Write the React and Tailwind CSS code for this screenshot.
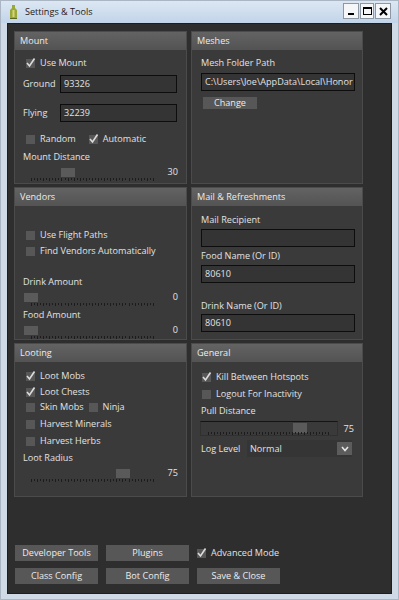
import React from "react";

const Check = ({ checked, label, className = "" }) => (
  <div className={`flex items-center h-[14px] ${className}`}>
    <span className="relative w-[9px] h-[9px] bg-[#575757] shrink-0">
      {checked && (
        <svg className="absolute -left-[1px] -top-[2px]" width="11" height="11" viewBox="0 0 11 11">
          <path d="M2 6 L4.5 9 L9.5 1.5" fill="none" stroke="#dcdcdc" strokeWidth="1.6" />
        </svg>
      )}
    </span>
    <span className="ml-[5px] whitespace-nowrap">{label}</span>
  </div>
);

const Ticks = () => (
  <div className="flex justify-between items-start">
    {Array.from({ length: 41 }).map((_, i) => (
      <span key={i} className={`w-[1px] bg-[#1c1c1c] ${i % 2 === 0 ? "h-[3px]" : "h-[2px]"}`} />
    ))}
  </div>
);

const Slider = ({ value, className = "" }) => (
  <div className={`flex items-start h-[17px] ${className}`}>
    <div className="relative w-[137px] h-[17px] ml-[1px]">
      <div
        className="absolute top-[4px] w-[14px] h-[9px] bg-[#5a5a5a]"
        style={{ left: `${(value / 100) * 123}px` }}
      />
      <div className="absolute left-[7px] right-[7px] top-[14px]">
        <Ticks />
      </div>
    </div>
    <span className="ml-auto mt-[3px]">{value}</span>
  </div>
);

const Field = ({ value = "", className = "" }) => (
  <div
    className={`h-[18px] bg-[#343434] border-[1.5px] border-[#0d0d0d] flex items-center px-[3px] whitespace-nowrap overflow-hidden ${className}`}
  >
    {value}
  </div>
);

const Panel = ({ title, children }) => (
  <div className="flex flex-col bg-[#3a3a3a] border border-[#4b4b4b]">
    <div className="h-[18px] shrink-0 px-[5px] flex items-center bg-gradient-to-b from-[#636363] to-[#535353] text-[#ececec]">
      {title}
    </div>
    <div className="flex-1 flex flex-col pl-[8px] pr-[8px]">{children}</div>
  </div>
);

const Btn = ({ children, className = "" }) => (
  <button className={`w-[83px] h-[16px] bg-[#575757] text-[#ececec] flex items-center justify-center ${className}`}>
    {children}
  </button>
);

export default function App() {
  return (
    <div className="w-[399px] h-[600px] bg-[#cfdae6] flex flex-col font-['Open_Sans',sans-serif] text-[9.1px] leading-none border border-[#aab6c3]">
      {/* title bar */}
      <div className="h-[22px] shrink-0 flex items-center bg-gradient-to-b from-[#dce7f3] to-[#c2d4e9]">
        <svg className="ml-[8px]" width="9" height="15" viewBox="0 0 9 15">
          <path d="M3 0 h3 v3 l2 2 v9 h-7 v-9 l2 -2z" fill="#9aa83a" />
          <path d="M3.5 5 h2 v7 h-2z" fill="#d9d27a" />
          <path d="M1 13 h7 v1 h-7z" fill="#5c6a22" />
        </svg>
        <span className="ml-[7px] text-[#1b1b1b]">Settings &amp; Tools</span>
        <div className="ml-auto mr-[7px] flex gap-[1px] mt-[-2px]">
          <div className="w-[16px] h-[16px] bg-[#f4f6f8] border border-[#8d98a4] flex items-end justify-center pb-[3px]">
            <span className="w-[6px] h-[2px] bg-black" />
          </div>
          <div className="w-[14px] h-[16px] bg-[#f4f6f8] border border-[#8d98a4] flex items-center justify-center">
            <span className="w-[9px] h-[8px] border border-black border-t-2" />
          </div>
          <div className="w-[16px] h-[16px] bg-[#f4f6f8] border border-[#8d98a4] flex items-center justify-center">
            <svg width="9" height="9" viewBox="0 0 9 9">
              <path d="M1 1 L8 8 M8 1 L1 8" stroke="black" strokeWidth="2" />
            </svg>
          </div>
        </div>
      </div>

      {/* client */}
      <div className="flex-1 mx-[6px] mb-[5px] bg-[#2e2e2e] border border-[#1e1e1e] pl-[6px] pt-[7px] text-[#e2e2e2]">
        <div className="grid grid-cols-[173px_172px] grid-rows-[153px_153px_154px] gap-x-[4px] gap-y-[3px]">
          {/* Mount */}
          <Panel title="Mount">
            <Check checked label="Use Mount" className="mt-[6px] ml-[3px]" />
            <div className="flex items-center mt-[5px]">
              <span className="w-[37px]">Ground</span>
              <Field value="93326" className="w-[117px]" />
            </div>
            <div className="flex items-center mt-[11px]">
              <span className="w-[37px]">Flying</span>
              <Field value="32239" className="w-[117px]" />
            </div>
            <div className="flex mt-[10px] ml-[3px]">
              <Check label="Random" />
              <Check checked label="Automatic" className="ml-[13px]" />
            </div>
            <div className="h-[14px] flex items-center mt-[4px]">Mount Distance</div>
            <Slider value={30} />
          </Panel>

          {/* Meshes */}
          <Panel title="Meshes">
            <div className="h-[14px] flex items-center mt-[6px] ml-[1px]">Mesh Folder Path</div>
            <Field value="C:\Users\Joe\AppData\Local\Honor" className="w-[154px] mt-[3px] ml-[1px]" />
            <Btn className="!w-[54px] !h-[12px] mt-[6px] ml-[3px]">Change</Btn>
          </Panel>

          {/* Vendors */}
          <Panel title="Vendors">
            <Check label="Use Flight Paths" className="mt-[22px] ml-[3px]" />
            <Check label="Find Vendors Automatically" className="mt-[2px] ml-[3px]" />
            <div className="h-[14px] flex items-center mt-[17px]">Drink Amount</div>
            <Slider value={0} />
            <div className="h-[14px] flex items-center mt-[2px]">Food Amount</div>
            <Slider value={0} />
          </Panel>

          {/* Mail & Refreshments */}
          <Panel title="Mail & Refreshments">
            <div className="h-[14px] flex items-center mt-[7px] ml-[1px]">Mail Recipient</div>
            <Field className="w-[154px] mt-[2px] ml-[1px]" />
            <div className="h-[14px] flex items-center mt-[2px] ml-[1px]">Food Name (Or ID)</div>
            <Field value="80610" className="w-[154px] mt-[2px] ml-[1px]" />
            <div className="h-[14px] flex items-center mt-[16px] ml-[1px]">Drink Name (Or ID)</div>
            <Field value="80610" className="w-[154px] mt-[1px] ml-[1px]" />
          </Panel>

          {/* Looting */}
          <Panel title="Looting">
            <Check checked label="Loot Mobs" className="mt-[7px] ml-[3px]" />
            <Check checked label="Loot Chests" className="mt-[2px] ml-[3px]" />
            <div className="flex mt-[1px] ml-[3px]">
              <Check label="Skin Mobs" />
              <Check label="Ninja" className="ml-[5px]" />
            </div>
            <Check label="Harvest Minerals" className="mt-[3px] ml-[3px]" />
            <Check label="Harvest Herbs" className="mt-[3px] ml-[3px]" />
            <div className="h-[14px] flex items-center mt-[3px]">Loot Radius</div>
            <Slider value={75} />
          </Panel>

          {/* General */}
          <Panel title="General">
            <Check checked label="Kill Between Hotspots" className="mt-[8px] ml-[2px]" />
            <Check label="Logout For Inactivity" className="mt-[3px] ml-[2px]" />
            <div className="h-[14px] flex items-center mt-[3px] ml-[1px]">Pull Distance</div>
            <div className="flex items-center mt-[3px]">
              <div className="relative w-[138px] h-[15px] border border-[#303030] border-t-[#141414]">
                <div
                  className="absolute top-[1px] w-[14px] h-[10px] bg-[#5a5a5a]"
                  style={{ left: `${0.75 * 123}px` }}
                />
                <div className="absolute left-[7px] right-[7px] top-[10px]">
                  <Ticks />
                </div>
              </div>
              <span className="ml-[6px]">75</span>
            </div>
            <div className="flex items-center h-[17px] mt-[4px] ml-[1px]">
              <span className="w-[46px]">Log Level</span>
              <div className="flex items-center w-[105px] h-[17px] bg-[#353535]">
                <span className="ml-[3px]">Normal</span>
                <div className="ml-auto w-[15px] h-[13px] bg-[#5c5c5c] flex items-center justify-center">
                  <svg width="8" height="6" viewBox="0 0 8 6">
                    <path d="M1 1 L4 4.5 L7 1" fill="none" stroke="#e6e6e6" strokeWidth="1.6" />
                  </svg>
                </div>
              </div>
            </div>
          </Panel>
        </div>

        {/* bottom buttons */}
        <div className="mt-[48px] ml-[1px] flex flex-col gap-[7px]">
          <div className="flex items-center gap-[8px]">
            <Btn>Developer Tools</Btn>
            <Btn>Plugins</Btn>
            <Check checked label="Advanced Mode" />
          </div>
          <div className="flex items-center gap-[8px]">
            <Btn>Class Config</Btn>
            <Btn>Bot Config</Btn>
            <Btn>Save &amp; Close</Btn>
          </div>
        </div>
      </div>
    </div>
  );
}
